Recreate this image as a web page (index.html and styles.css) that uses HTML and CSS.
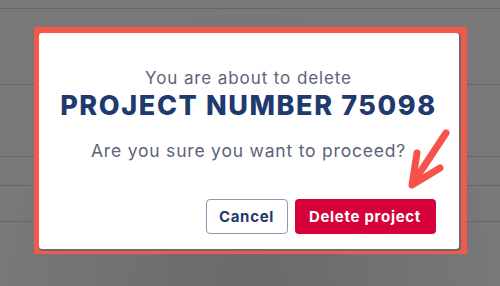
FILE: index.html
```html
<!DOCTYPE html>
<html>
<head>
<meta charset="utf-8">
<link rel="stylesheet" href="styles.css">
</head>
<body>
<div class="frame">
  <div class="modal">
    <p class="lead">You are about to delete</p>
    <h1 class="title">PROJECT NUMBER 75098</h1>
    <p class="question">Are you sure you want to proceed?</p>
    <div class="actions">
      <button class="btn btn-cancel">Cancel</button>
      <button class="btn btn-delete">Delete project</button>
    </div>
    <svg class="arrow" width="56" height="70" viewBox="0 0 56 70">
      <path d="M45 8 L12 58" stroke="#f5534a" stroke-width="7" stroke-linecap="round" fill="none"/>
      <path d="M16 28 L11 60 L39 43" stroke="#f5534a" stroke-width="7" stroke-linecap="round" stroke-linejoin="round" fill="none"/>
    </svg>
  </div>
</div>
</body>
</html>
```
FILE: styles.css
```css
html, body {
  margin: 0;
  padding: 0;
}
body {
  width: 500px;
  height: 286px;
  overflow: hidden;
  font-family: "Inter", "Open Sans", sans-serif;
  background-color: #787878;
  background-image:
    linear-gradient(#666, #666),
    linear-gradient(#666, #666),
    linear-gradient(#666, #666),
    linear-gradient(#666, #666),
    linear-gradient(#666, #666),
    radial-gradient(ellipse at 50% 100%, rgba(0,0,0,0.12), rgba(0,0,0,0) 70%);
  background-size: 100% 1px, 100% 1px, 100% 1px, 100% 1px, 100% 1px, 100% 100%;
  background-position: 0 8px, 0 84px, 0 156px, 0 185px, 0 221px, 0 0;
  background-repeat: no-repeat;
  display: flex;
  justify-content: center;
  align-items: flex-start;
  padding-top: 27px;
  box-sizing: border-box;
}
.frame {
  background: #f4574b;
  padding: 6px 8px 5px 5px;
}
.modal {
  position: relative;
  width: 420px;
  height: 216px;
  box-sizing: border-box;
  background: #fff;
  border-radius: 3px;
  box-shadow: 1px 1px 0 1px #6b6b6b;
  display: flex;
  flex-direction: column;
  align-items: center;
  padding-top: 35px;
}
.lead {
  margin: 0;
  font-size: 17px;
  line-height: 20px;
  color: #5b6478;
  font-weight: 400;
  letter-spacing: 0.9px;
}
.title {
  margin: 2px 0 0;
  font-size: 27px;
  line-height: 32px;
  font-weight: 800;
  color: #1f3a6e;
  letter-spacing: 1.6px;
}
.question {
  margin: 18px 0 0;
  font-size: 17.5px;
  line-height: 22px;
  color: #5b6478;
  letter-spacing: 0.8px;
}
.actions {
  margin-top: auto;
  align-self: flex-end;
  display: flex;
  gap: 7px;
  padding: 0 23px 15px 0;
}
.btn {
  height: 35px;
  border-radius: 4px;
  font-family: "Inter", "Open Sans", sans-serif;
  font-size: 15px;
  font-weight: 700;
  letter-spacing: 0.7px;
  padding: 0;
}
.btn-cancel {
  width: 82px;
  background: #fff;
  border: 1px solid #8a97b5;
  color: #1f3a6e;
}
.btn-delete {
  width: 141px;
  background: #d6003a;
  border: none;
  color: #fff;
}
.arrow {
  position: absolute;
  left: 362px;
  top: 92px;
}
```
